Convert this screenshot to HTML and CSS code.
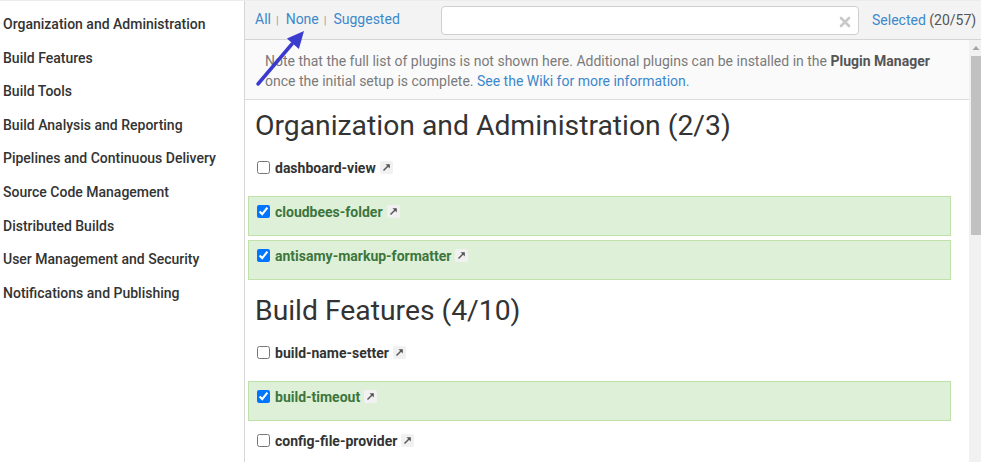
FILE: index.html
```html
<!DOCTYPE html>
<html lang="en">
<head>
<meta charset="utf-8">
<title>Customize Jenkins</title>
<link rel="stylesheet" href="styles.css">
</head>
<body>
<div class="app">
  <nav class="sidebar">
    <a class="cat">Organization and Administration</a>
    <a class="cat">Build Features</a>
    <a class="cat">Build Tools</a>
    <a class="cat">Build Analysis and Reporting</a>
    <a class="cat">Pipelines and Continuous Delivery</a>
    <a class="cat">Source Code Management</a>
    <a class="cat">Distributed Builds</a>
    <a class="cat">User Management and Security</a>
    <a class="cat">Notifications and Publishing</a>
  </nav>
  <main class="main">
    <div class="toolbar">
      <div class="filters">
        <a class="link">All</a><span class="sep">|</span><a class="link">None</a><span class="sep">|</span><a class="link">Suggested</a>
      </div>
      <div class="search">
        <input class="search-input" type="text">
        <svg class="clear" width="12" height="12" viewBox="0 0 12 12"><path d="M2 2 L10 10 M10 2 L2 10" stroke="#c9c9c9" stroke-width="2.6" stroke-linecap="round"/></svg>
      </div>
      <div class="selected"><a class="link">Selected</a> (20/57)</div>
    </div>
    <div class="body">
      <div class="content">
        <div class="note">
          Note that the full list of plugins is not shown here. Additional plugins can be installed in the <b>Plugin Manager</b> once the initial setup is complete. <a class="link">See the Wiki for more information.</a>
        </div>

        <h2 class="cat-title">Organization and Administration (2/3)</h2>
        <div class="plugin">
          <input type="checkbox" class="cb"><span class="name">dashboard-view</span><span class="ext"><svg width="9" height="9" viewBox="0 0 9 9"><path d="M1.5 7.5 L7 2" stroke="#555" stroke-width="1.4"/><path d="M3.5 1.2 L7.8 1.2 L7.8 5.5 Z" fill="#555"/></svg></span>
        </div>
        <div class="plugin on">
          <input type="checkbox" class="cb" checked><span class="name">cloudbees-folder</span><span class="ext"><svg width="9" height="9" viewBox="0 0 9 9"><path d="M1.5 7.5 L7 2" stroke="#555" stroke-width="1.4"/><path d="M3.5 1.2 L7.8 1.2 L7.8 5.5 Z" fill="#555"/></svg></span>
        </div>
        <div class="plugin on">
          <input type="checkbox" class="cb" checked><span class="name">antisamy-markup-formatter</span><span class="ext"><svg width="9" height="9" viewBox="0 0 9 9"><path d="M1.5 7.5 L7 2" stroke="#555" stroke-width="1.4"/><path d="M3.5 1.2 L7.8 1.2 L7.8 5.5 Z" fill="#555"/></svg></span>
        </div>

        <h2 class="cat-title">Build Features (4/10)</h2>
        <div class="plugin">
          <input type="checkbox" class="cb"><span class="name">build-name-setter</span><span class="ext"><svg width="9" height="9" viewBox="0 0 9 9"><path d="M1.5 7.5 L7 2" stroke="#555" stroke-width="1.4"/><path d="M3.5 1.2 L7.8 1.2 L7.8 5.5 Z" fill="#555"/></svg></span>
        </div>
        <div class="plugin on">
          <input type="checkbox" class="cb" checked><span class="name">build-timeout</span><span class="ext"><svg width="9" height="9" viewBox="0 0 9 9"><path d="M1.5 7.5 L7 2" stroke="#555" stroke-width="1.4"/><path d="M3.5 1.2 L7.8 1.2 L7.8 5.5 Z" fill="#555"/></svg></span>
        </div>
        <div class="plugin">
          <input type="checkbox" class="cb"><span class="name">config-file-provider</span><span class="ext"><svg width="9" height="9" viewBox="0 0 9 9"><path d="M1.5 7.5 L7 2" stroke="#555" stroke-width="1.4"/><path d="M3.5 1.2 L7.8 1.2 L7.8 5.5 Z" fill="#555"/></svg></span>
        </div>
      </div>
      <div class="scrollbar">
        <div class="sb-button"><svg width="12" height="16" viewBox="0 0 12 16"><path d="M5 6 L8.5 10 L1.5 10 Z" fill="#a3a3a3"/></svg></div>
        <div class="sb-thumb"></div>
      </div>
    </div>
  </main>
  <svg class="annotation" width="60" height="64" viewBox="0 0 60 64">
    <line x1="6" y1="55" x2="40" y2="15" stroke="#3b3ccf" stroke-width="3.5" stroke-linecap="round"/>
    <polygon points="52,2 46.9,20 34.9,9.6" fill="#3b3ccf"/>
  </svg>
</div>
</body>
</html>
```
FILE: styles.css
```css
* { box-sizing: border-box; }
html, body {
  margin: 0;
  padding: 0;
  height: 462px;
  overflow: hidden;
  background: #fff;
}
body {
  font-family: Roboto, "Helvetica Neue", "Liberation Sans", Arial, sans-serif;
  font-size: 14px;
  color: #333;
}
.app {
  position: relative;
  display: flex;
  height: 462px;
  border-top: 1px solid #ececec;
}
.sidebar {
  width: 245px;
  flex: none;
  border-right: 1px solid #d6d6d6;
  padding-top: 7px;
  display: flex;
  flex-direction: column;
}
.cat {
  display: block;
  height: 33.6px;
  line-height: 33.6px;
  padding-left: 3px;
  font-weight: 500;
  color: #333;
  white-space: nowrap;
}
.main {
  flex: 1;
  min-width: 0;
  display: flex;
  flex-direction: column;
}
.toolbar {
  height: 39px;
  flex: none;
  background: #f3f3f3;
  border-bottom: 1px solid #d4d4d4;
  display: flex;
  align-items: center;
  padding-left: 10px;
}
.link { color: #3c88cc; text-decoration: none; }
.filters {
  width: 186px;
  flex: none;
  line-height: 20px;
}
.sep {
  color: #9a9a9a;
  font-size: 11px;
  margin: 0 7px 0 5px;
}
.search {
  position: relative;
  width: 418px;
  height: 29px;
  flex: none;
}
.search-input {
  width: 100%;
  height: 100%;
  margin: 0;
  border: 1px solid #cfcfcf;
  border-radius: 4px;
  background: #fff;
  outline: none;
}
.clear {
  position: absolute;
  right: 8px;
  top: 10px;
}
.selected {
  margin-left: 13px;
  color: #555;
  white-space: nowrap;
}
.body {
  flex: 1;
  display: flex;
  min-height: 0;
}
.content {
  flex: 1;
  min-width: 0;
  overflow: hidden;
  padding: 0 18px 0 3px;
}
.note {
  margin: 0 -18px 0 -3px;
  padding: 11px 30px 8px 20px;
  background: #fafafa;
  border-bottom: 1px solid #dcdcdc;
  color: #7a7a7a;
  line-height: 20px;
}
.note b { color: #555; font-weight: 700; }
.cat-title {
  margin: 8px 0 8px 7px;
  font-size: 28.3px;
  font-weight: 400;
  line-height: 36px;
  color: #333;
  white-space: nowrap;
}
.plugin + .cat-title { margin-top: 13px; }
.plugin {
  height: 40px;
  margin-bottom: 4px;
  border: 1px solid transparent;
  padding: 5px 8px 0;
  display: flex;
  align-items: flex-start;
}
.cb {
  width: 13px;
  height: 13px;
  margin: 3px 5px 0 0;
  flex: none;
}
.name {
  line-height: 20px;
  font-weight: 700;
  color: #333;
}
.on {
  background: #dff0d8;
  border-color: #bfe2ab;
}
.on .name { color: #3c763d; }
.ext {
  width: 13px;
  height: 13px;
  margin: 3px 0 0 4px;
  background: #f1f1f1;
  border-radius: 2px;
  display: flex;
  align-items: center;
  justify-content: center;
  flex: none;
}
.scrollbar {
  width: 12px;
  flex: none;
  background: #f1f1f1;
  display: flex;
  flex-direction: column;
}
.sb-button {
  height: 16px;
  padding-left: 2px;
}
.sb-thumb {
  height: 179px;
  margin-left: 2px;
  background: #c1c1c1;
}
.annotation {
  position: absolute;
  left: 252px;
  top: 28px;
}
```
